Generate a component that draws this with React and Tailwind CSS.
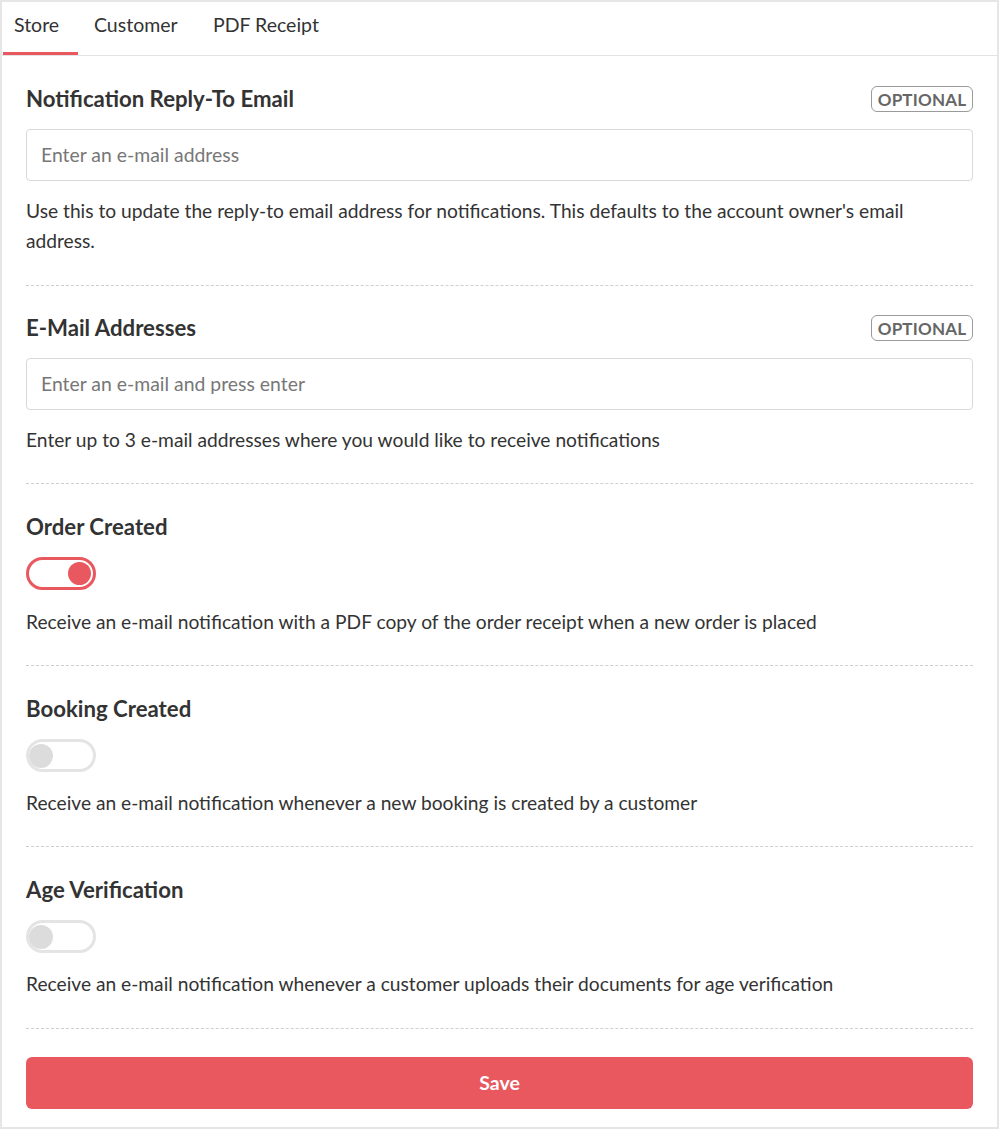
import React from "react";

function Optional() {
  return (
    <span className="inline-flex items-center justify-center h-[26px] w-[102px] rounded-[6px] border border-[#9a9a9a] text-[17px] font-bold text-[#666] leading-none tracking-[0.2px]">
      OPTIONAL
    </span>
  );
}

function Toggle({ on }) {
  return (
    <div
      className={
        on
          ? "w-[70px] h-[33px] rounded-full border-[3px] border-[#e8585e] flex items-center justify-end px-[2px] bg-white"
          : "w-[70px] h-[33px] rounded-full border-[3px] border-[#e4e4e4] flex items-center justify-start px-[0px] bg-white"
      }
    >
      <div
        className={
          on
            ? "w-[23px] h-[23px] rounded-full bg-[#e8585e]"
            : "w-[24px] h-[24px] rounded-full bg-[#dcdcdc]"
        }
      />
    </div>
  );
}

function InputSection({ title, placeholder, desc, pt, pb }) {
  return (
    <div className={`${pt} ${pb} border-b border-dashed border-[#cfcfcf]`}>
      <div className="flex items-center justify-between h-[28px]">
        <h2 className="text-[22.2px] leading-[28px] font-bold text-[#333]">{title}</h2>
        <Optional />
      </div>
      <div className="mt-[16px] h-[52px] rounded-[4px] border border-[#d9d9d9] flex items-center px-[14px] text-[19.4px] text-[#777]">
        {placeholder}
      </div>
      <p className="mt-[15px] text-[19.2px] leading-[30px] text-[#333]">{desc}</p>
    </div>
  );
}

function ToggleSection({ title, on, desc, mt, pb }) {
  return (
    <div className={`pt-[29px] ${pb} border-b border-dashed border-[#cfcfcf]`}>
      <h2 className="text-[22.2px] leading-[28px] font-bold text-[#333]">{title}</h2>
      <div className="mt-[16px]">
        <Toggle on={on} />
      </div>
      <p className={`${mt} text-[19.2px] leading-[30px] text-[#333]`}>{desc}</p>
    </div>
  );
}

export default function App() {
  return (
    <div
      className="w-[999px] bg-white border-2 border-[#e6e6e6] text-[#333]"
      style={{ fontFamily: "Lato, 'Open Sans', sans-serif" }}
    >
      <div className="flex border-b border-[#e3e3e3] pl-[1px]">
        <div className="h-[53px] pt-[11px] pl-[11px] w-[75px] border-b-[3px] border-[#e8585e] text-[19.5px] leading-[24px] text-[#333]">
          Store
        </div>
        <div className="h-[53px] pt-[11px] pl-[16px] w-[135px] text-[19.5px] leading-[24px] text-[#333]">
          Customer
        </div>
        <div className="h-[53px] pt-[11px] text-[19.5px] leading-[24px] text-[#333]">
          PDF Receipt
        </div>
      </div>
      <div className="px-[24px]">
        <InputSection
          pt="pt-[29px]"
          pb="pb-[29px]"
          title="Notification Reply-To Email"
          placeholder="Enter an e-mail address"
          desc="Use this to update the reply-to email address for notifications. This defaults to the account owner's email address."
        />
        <InputSection
          pt="pt-[28px]"
          pb="pb-[28px]"
          title="E-Mail Addresses"
          placeholder="Enter an e-mail and press enter"
          desc="Enter up to 3 e-mail addresses where you would like to receive notifications"
        />
        <ToggleSection
          title="Order Created"
          on
          mt="mt-[17px]"
          pb="pb-[28px]"
          desc="Receive an e-mail notification with a PDF copy of the order receipt when a new order is placed"
        />
        <ToggleSection
          title="Booking Created"
          mt="mt-[16px]"
          pb="pb-[28px]"
          desc="Receive an e-mail notification whenever a new booking is created by a customer"
        />
        <ToggleSection
          title="Age Verification"
          mt="mt-[16px]"
          pb="pb-[29px]"
          desc="Receive an e-mail notification whenever a customer uploads their documents for age verification"
        />
        <div className="pt-[28px] pb-[18px]">
          <button className="w-full h-[52px] rounded-[6px] bg-[#e8585e] text-white text-[19.5px] font-bold">
            Save
          </button>
        </div>
      </div>
    </div>
  );
}
